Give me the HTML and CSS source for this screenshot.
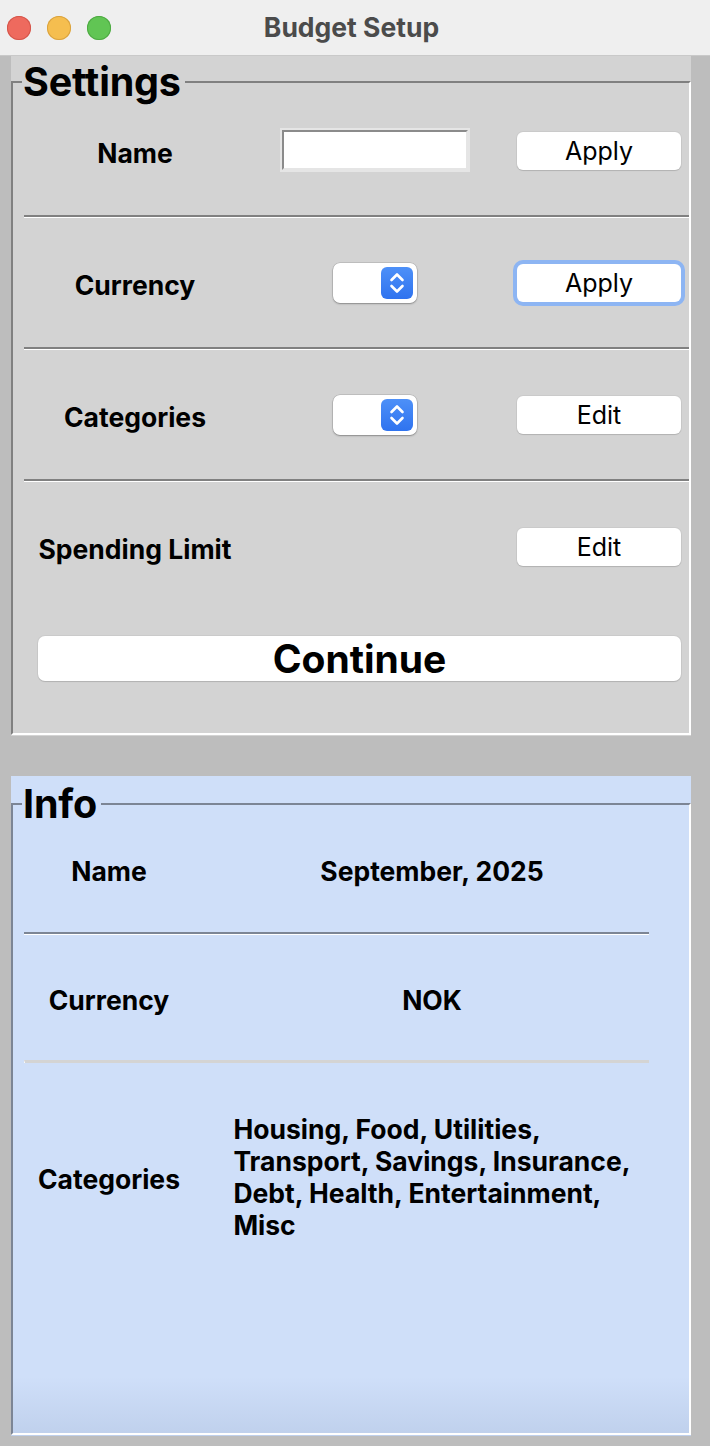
FILE: index.html
```html
<!DOCTYPE html>
<html lang="en">
<head>
<meta charset="utf-8">
<title>Budget Setup</title>
<link rel="stylesheet" href="styles.css">
</head>
<body>
<div class="window">
  <header class="titlebar">
    <div class="lights">
      <span class="light red"></span>
      <span class="light yellow"></span>
      <span class="light green"></span>
    </div>
    <div class="title">Budget Setup</div>
  </header>
  <main class="content">
    <section class="panel settings">
      <fieldset class="frame">
        <legend>Settings</legend>
        <div class="rows">
          <div class="srow">
            <div class="label">Name</div>
            <div class="ctl"><input class="entry" type="text" aria-label="Name"></div>
            <div class="act"><button class="btn">Apply</button></div>
          </div>
          <div class="sep"></div>
          <div class="srow">
            <div class="label">Currency</div>
            <div class="ctl">
              <div class="popup">
                <span class="stepper"><svg viewBox="0 0 32 32" width="32" height="32"><path d="M10.5 13 L16 7.5 L21.5 13 M10.5 19 L16 24.5 L21.5 19" fill="none" stroke="#fff" stroke-width="2.6" stroke-linecap="round" stroke-linejoin="round"/></svg></span>
              </div>
            </div>
            <div class="act"><button class="btn focused">Apply</button></div>
          </div>
          <div class="sep"></div>
          <div class="srow">
            <div class="label">Categories</div>
            <div class="ctl">
              <div class="popup">
                <span class="stepper"><svg viewBox="0 0 32 32" width="32" height="32"><path d="M10.5 13 L16 7.5 L21.5 13 M10.5 19 L16 24.5 L21.5 19" fill="none" stroke="#fff" stroke-width="2.6" stroke-linecap="round" stroke-linejoin="round"/></svg></span>
              </div>
            </div>
            <div class="act"><button class="btn">Edit</button></div>
          </div>
          <div class="sep"></div>
          <div class="srow">
            <div class="label">Spending Limit</div>
            <div class="ctl"></div>
            <div class="act"><button class="btn">Edit</button></div>
          </div>
          <button class="continue">Continue</button>
        </div>
      </fieldset>
    </section>
    <section class="panel info">
      <fieldset class="frame info-frame">
        <legend>Info</legend>
        <div class="irows">
          <div class="irow r1">
            <div class="label">Name</div>
            <div class="value">September, 2025</div>
          </div>
          <div class="isep"></div>
          <div class="irow r2">
            <div class="label">Currency</div>
            <div class="value">NOK</div>
          </div>
          <div class="isep-light"></div>
          <div class="irow r3">
            <div class="label">Categories</div>
            <div class="value list">Housing, Food, Utilities,<br>Transport, Savings, Insurance,<br>Debt, Health, Entertainment,<br>Misc</div>
          </div>
        </div>
      </fieldset>
    </section>
  </main>
</div>
</body>
</html>
```

FILE: styles.css
```css
* { box-sizing: border-box; }
html, body { margin: 0; padding: 0; }
body {
  width: 710px;
  height: 1446px;
  background: #bdbdbd;
  font-family: Inter, "Liberation Sans", Arial, sans-serif;
  color: #000;
}
.window {
  width: 710px;
  height: 1446px;
  display: flex;
  flex-direction: column;
}
.titlebar {
  height: 56px;
  flex: 0 0 56px;
  background: #efefef;
  border-bottom: 1px solid #c9c9c9;
  display: flex;
  align-items: center;
}
.lights {
  display: flex;
  gap: 16px;
  padding-left: 7px;
}
.light {
  width: 24px;
  height: 24px;
  border-radius: 50%;
  display: block;
}
.red { background: #ee6a5e; box-shadow: inset 0 0 0 1px #d4564b; }
.yellow { background: #f5be4f; box-shadow: inset 0 0 0 1px #d9a23f; }
.green { background: #61c554; box-shadow: inset 0 0 0 1px #4ea943; }
.title {
  flex: 1;
  text-align: center;
  font-size: 26.5px;
  font-weight: 700;
  color: #4b4b4b;
  padding-right: 118px;
  margin-top: -1px;
}
.content {
  flex: 1;
  display: flex;
  flex-direction: column;
  padding: 0 19px 10px 11px;
}
.panel {
  width: 680px;
}
.settings {
  background: #d3d3d3;
  padding: 3px 0 1px 0;
}
.info {
  margin-top: 40px;
  flex: 1;
  display: flex;
  flex-direction: column;
  padding: 5px 0 1px 0;
  background: linear-gradient(to bottom, #cfdff9 0%, #cfdff9 91%, #bfd0ec 100%);
}
.frame {
  margin: 0;
  padding: 0 0 52px 0;
  min-width: 0;
  border-style: solid;
  border-width: 2px;
  border-color: #808080 #ffffff #ffffff #808080;
}
.info-frame {
  flex: 1;
  padding-bottom: 0;
  border-color: #7c8595 #ffffff #ffffff #7c8595;
}
legend {
  font-size: 39.5px;
  font-weight: 700;
  line-height: 46px;
  margin-left: 9px;
  padding: 0 4px 0 1px;
  letter-spacing: -0.2px;
}
.rows {
  margin-left: 11px;
  margin-top: -19px;
}
.srow {
  display: grid;
  grid-template-columns: 222px 258px 1fr;
  height: 129px;
  align-items: center;
}
.label {
  font-size: 26.5px;
  font-weight: 700;
  text-align: center;
  padding-top: 4px;
}
.ctl {
  display: flex;
  justify-content: center;
}
.act {
  padding-left: 13px;
}
.sep {
  height: 3px;
  border-top: 2px solid #808080;
  border-bottom: 1px solid #ffffff;
}
.entry {
  width: 186px;
  height: 40px;
  margin: 0;
  border: 2px solid;
  border-color: #8b8b8b #e5e5e5 #e5e5e5 #8b8b8b;
  box-shadow: 0 0 0 2px #e5e5e5;
  background: #fff;
  outline: none;
  padding: 0 4px;
  font: inherit;
  margin-top: -1px;
}
.btn {
  width: 164px;
  height: 38px;
  border: none;
  border-radius: 6px;
  background: #fff;
  box-shadow: 0 0 0 1px rgba(0,0,0,0.04), 0 1px 1px rgba(0,0,0,0.12);
  font-family: inherit;
  font-size: 25px;
  font-weight: 400;
  color: #000;
  padding: 0;
  line-height: 36px;
  display: block;
}
.btn.focused {
  box-shadow: 0 0 0 4px #8db5f3;
}
.popup {
  width: 84px;
  height: 40px;
  background: #fff;
  border-radius: 7px;
  box-shadow: 0 0 0 0.5px rgba(0,0,0,0.18), 0 1px 2px rgba(0,0,0,0.28);
  display: flex;
  justify-content: flex-end;
  align-items: center;
  padding-right: 4px;
}
.stepper {
  width: 32px;
  height: 32px;
  border-radius: 6px;
  background: linear-gradient(to bottom, #4d90f8, #2f73ef);
  display: block;
}
.stepper svg { display: block; }
.continue {
  display: block;
  margin: 25px 0 0 14px;
  width: 643px;
  height: 45px;
  border: none;
  border-radius: 7px;
  background: #fff;
  box-shadow: 0 0 0 1px rgba(0,0,0,0.04), 0 1px 1px rgba(0,0,0,0.12);
  font-family: inherit;
  font-size: 39px;
  font-weight: 700;
  color: #000;
  line-height: 45px;
  padding: 0;
}
.irows {
  margin-left: 11px;
  margin-top: -22px;
  width: 625px;
}
.irow {
  display: grid;
  grid-template-columns: 170px 434px;
  column-gap: 21px;
  align-items: center;
}
.r1 { height: 127px; }
.r2 { height: 125px; }
.r3 { height: 228px; }
.value {
  font-size: 26.5px;
  font-weight: 700;
  text-align: center;
  padding-top: 4px;
}
.value.list {
  justify-self: center;
  text-align: left;
  white-space: nowrap;
  line-height: 32px;
  padding-top: 0;
}
.isep {
  height: 3px;
  border-top: 2px solid #7c8595;
  border-bottom: 1px solid #ffffff;
}
.isep-light {
  height: 3px;
  width: 625px;
  border-top: 3px solid #d4d4d4;
  border-left: 1px solid #ffffff;
}
```
